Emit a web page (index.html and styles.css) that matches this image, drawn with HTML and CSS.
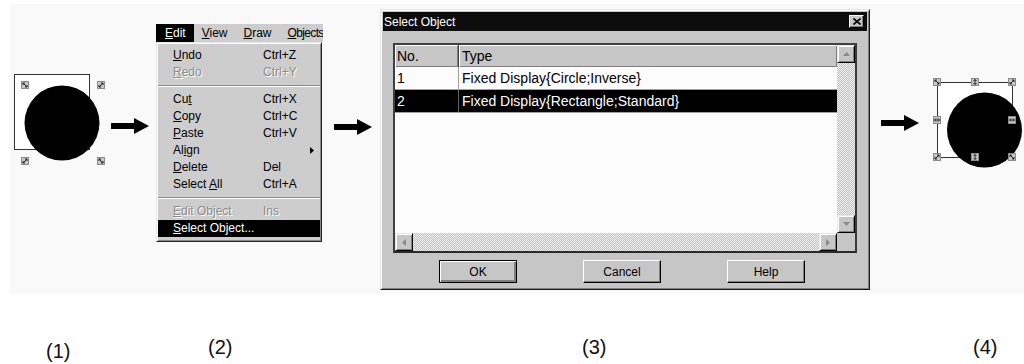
FILE: index.html
```html
<!DOCTYPE html>
<html lang="en">

<head>
    <meta charset="UTF-8">
    <meta name="viewport" content="width=device-width, initial-scale=1.0">
    <title>Select Object</title>
    <link rel="stylesheet" href="styles.css">
</head>

<body>
    <div class="stage">
        <!-- (1) circle drawn over a selected rectangle -->
        <svg class="fig fig-before" width="92" height="92" viewBox="0 0 92 92">
            <defs>
                <g id="h-nw">
                    <rect x="0.5" y="0.5" width="7" height="7" fill="#c6c6c6" stroke="#8c8c8c"/>
                    <path d="M2 2 L6 6 M2 2 h2 M2 2 v2 M6 6 h-2 M6 6 v-2" stroke="#222" stroke-width="1"/>
                </g>
                <g id="h-ne">
                    <rect x="0.5" y="0.5" width="7" height="7" fill="#c6c6c6" stroke="#8c8c8c"/>
                    <path d="M6 2 L2 6 M6 2 h-2 M6 2 v2 M2 6 h2 M2 6 v-2" stroke="#222" stroke-width="1"/>
                </g>
                <g id="h-v">
                    <rect x="0.5" y="0.5" width="7" height="7" fill="#c6c6c6" stroke="#8c8c8c"/>
                    <path d="M4 1.5 V6.5 M2.5 3 L4 1.5 L5.5 3 M2.5 5 L4 6.5 L5.5 5" stroke="#222" stroke-width="1" fill="none"/>
                </g>
                <g id="h-h">
                    <rect x="0.5" y="0.5" width="7" height="7" fill="#c6c6c6" stroke="#8c8c8c"/>
                    <path d="M1.5 4 H6.5 M3 2.5 L1.5 4 L3 5.5 M5 2.5 L6.5 4 L5 5.5" stroke="#222" stroke-width="1" fill="none"/>
                </g>
            </defs>
            <rect x="0.5" y="0.5" width="75" height="75" fill="#fff" stroke="#333"/>
            <circle cx="48" cy="49" r="37.5" fill="#000"/>
            <use href="#h-nw" x="7" y="7"/>
            <use href="#h-ne" x="83" y="7"/>
            <use href="#h-ne" x="7" y="83"/>
            <use href="#h-nw" x="83" y="83"/>
        </svg>

        <svg class="arrow arrow-1" width="38" height="16" viewBox="0 0 38 16">
            <path d="M0 5 H23 V0 L38 8 L23 16 V11 H0 Z" fill="#000"/>
        </svg>

        <!-- (2) Edit menu -->
        <div class="menu">
            <div class="menubar">
                <span class="menubar-item is-open"><u>E</u>dit</span>
                <span class="menubar-item"><u>V</u>iew</span>
                <span class="menubar-item"><u>D</u>raw</span>
                <span class="menubar-item"><u>O</u>bjects</span>
            </div>
            <ul class="dropdown">
                <li class="item"><span><u>U</u>ndo</span><span>Ctrl+Z</span></li>
                <li class="item is-disabled"><span><u>R</u>edo</span><span>Ctrl+Y</span></li>
                <li class="sep"></li>
                <li class="item"><span>Cu<u>t</u></span><span>Ctrl+X</span></li>
                <li class="item"><span><u>C</u>opy</span><span>Ctrl+C</span></li>
                <li class="item"><span><u>P</u>aste</span><span>Ctrl+V</span></li>
                <li class="item"><span>Al<u>i</u>gn</span><span></span>
                    <svg class="submenu" width="4" height="7" viewBox="0 0 4 7"><path d="M0 0 L4 3.5 L0 7 Z" fill="#000"/></svg>
                </li>
                <li class="item"><span><u>D</u>elete</span><span>Del</span></li>
                <li class="item"><span>Select <u>A</u>ll</span><span>Ctrl+A</span></li>
                <li class="sep"></li>
                <li class="item is-disabled"><span><u>E</u>dit Object</span><span>Ins</span></li>
                <li class="item is-active"><span><u>S</u>elect Object...</span><span></span></li>
            </ul>
        </div>

        <svg class="arrow arrow-2" width="38" height="16" viewBox="0 0 38 16">
            <path d="M0 5 H23 V0 L38 8 L23 16 V11 H0 Z" fill="#000"/>
        </svg>

        <!-- (3) Select Object dialog -->
        <div class="dialog">
            <div class="titlebar">
                <span>Select Object</span>
                <span class="close">
                    <svg width="8" height="7" viewBox="0 0 8 7"><path d="M0.5 0.5 L7.5 6.5 M7.5 0.5 L0.5 6.5" stroke="#000" stroke-width="1.6"/></svg>
                </span>
            </div>
            <div class="dialog-body">
                <div class="listbox">
                    <div class="table">
                        <div class="row row-head">
                            <span class="cell">No.</span>
                            <span class="cell">Type</span>
                        </div>
                        <div class="row">
                            <span class="cell">1</span>
                            <span class="cell">Fixed Display{Circle;Inverse}</span>
                        </div>
                        <div class="row is-selected">
                            <span class="cell">2</span>
                            <span class="cell">Fixed Display{Rectangle;Standard}</span>
                        </div>
                    </div>
                    <div class="vscroll">
                        <span class="sbtn"><svg width="7" height="4" viewBox="0 0 7 4"><path d="M3.5 0 L7 4 H0 Z" fill="#8a8a8a"/></svg></span>
                        <span class="track"></span>
                        <span class="sbtn"><svg width="7" height="4" viewBox="0 0 7 4"><path d="M0 0 H7 L3.5 4 Z" fill="#8a8a8a"/></svg></span>
                    </div>
                    <div class="hscroll">
                        <span class="sbtn"><svg width="4" height="7" viewBox="0 0 4 7"><path d="M4 0 V7 L0 3.5 Z" fill="#8a8a8a"/></svg></span>
                        <span class="track"></span>
                        <span class="sbtn"><svg width="4" height="7" viewBox="0 0 4 7"><path d="M0 0 L4 3.5 L0 7 Z" fill="#8a8a8a"/></svg></span>
                    </div>
                    <div class="corner"></div>
                </div>
                <div class="dialog-buttons">
                    <button class="btn is-default">OK</button>
                    <button class="btn">Cancel</button>
                    <button class="btn">Help</button>
                </div>
            </div>
        </div>

        <svg class="arrow arrow-3" width="38" height="16" viewBox="0 0 38 16">
            <path d="M0 5 H23 V0 L38 8 L23 16 V11 H0 Z" fill="#000"/>
        </svg>

        <!-- (4) circle selected -->
        <svg class="fig fig-after" width="91" height="93" viewBox="0 0 91 93">
            <rect x="4.5" y="4.5" width="75" height="75" fill="#fff" stroke="#333"/>
            <circle cx="51.5" cy="52" r="37.5" fill="#000"/>
            <use href="#h-nw" x="0" y="0"/>
            <use href="#h-v" x="38" y="0"/>
            <use href="#h-ne" x="75" y="0"/>
            <use href="#h-h" x="0" y="38"/>
            <use href="#h-h" x="75" y="38"/>
            <use href="#h-ne" x="0" y="75"/>
            <use href="#h-v" x="38" y="75"/>
            <use href="#h-nw" x="75" y="75"/>
        </svg>
    </div>

    <div class="captions">
        <span class="cap cap-1">(1)</span>
        <span class="cap cap-2">(2)</span>
        <span class="cap cap-3">(3)</span>
        <span class="cap cap-4">(4)</span>
    </div>
</body>

</html>
```

FILE: styles.css
```css
body {
    margin: 0;
    background: #fff;
    font-family: 'Liberation Sans', Arial, sans-serif;
    color: #000;
}

.stage {
    display: flex;
    align-items: flex-start;
    width: 1014px;
    height: 290px;
    margin: 4px 0 0 10px;
    background: #f9f9f9;
}

.fig,
.arrow {
    display: block;
    flex-shrink: 0;
}

.fig-before {
    margin: 70px 0 0 4px;
}

.arrow-1 {
    margin: 114px 0 0 5px;
}

.arrow-2 {
    margin: 115px 0 0 11px;
}

.arrow-3 {
    margin: 111px 0 0 11px;
}

.fig-after {
    margin: 74px 0 0 14px;
}

/* menu */

.menu {
    width: 167px;
    margin: 20px 0 0 7px;
    font-size: 12px;
    flex-shrink: 0;
}

.menubar {
    display: flex;
    height: 18px;
    line-height: 18px;
    background: #cdcdcd;
    white-space: nowrap;
    overflow: hidden;
}

.menubar-item {
    padding: 0 8px;
}

.menubar-item:last-child {
    padding-right: 0;
    letter-spacing: -0.65px;
}

.menubar-item.is-open {
    padding-left: 9px;
    background: #000;
    color: #fff;
}

.dropdown {
    list-style: none;
    margin: 0;
    width: 166px;
    box-sizing: border-box;
    padding: 4px 1px 4px 1px;
    background: #cdcdcd;
    border: 1px solid;
    border-color: #e8e8e8 #222 #222 #e8e8e8;
    box-shadow: inset 1px 1px #fff, inset -1px -1px #8a8a8a;
}

.item {
    display: grid;
    grid-template-columns: 90px 1fr auto;
    align-items: center;
    height: 17px;
    line-height: 17px;
    padding: 0 6px 0 15px;
}

.item.is-disabled {
    color: #8c8c8c;
    text-shadow: 1px 1px 0 #fff;
}

.item.is-active {
    background: #000;
    color: #fff;
}

.submenu {
    display: block;
}

.sep {
    height: 2px;
    margin: 4px 0;
    background: #8a8a8a;
    border-bottom: 1px solid #fff;
    box-sizing: border-box;
}

/* dialog */

.dialog {
    display: flex;
    flex-direction: column;
    flex-shrink: 0;
    width: 490px;
    height: 281px;
    box-sizing: border-box;
    margin: 5px 0 0 8px;
    padding: 2px;
    background: #c6c6c6;
    border: 1px solid;
    border-color: #e6e6e6 #1a1a1a #1a1a1a #e6e6e6;
    box-shadow: inset 1px 1px #fff, inset -1px -1px #808080;
    font-size: 12px;
}

.titlebar {
    display: flex;
    align-items: center;
    justify-content: space-between;
    height: 19px;
    padding: 0 3px 0 1px;
    background: #0c0c0c;
    color: #fff;
}

.close {
    display: flex;
    align-items: center;
    justify-content: center;
    width: 15px;
    height: 13px;
    box-sizing: border-box;
    background: #c6c6c6;
    border: 1px solid;
    border-color: #fff #000 #000 #fff;
    box-shadow: inset -1px -1px #808080;
}

.dialog-body {
    padding: 12px 10px 0;
}

.listbox {
    display: grid;
    grid-template-columns: 1fr 18px;
    grid-template-rows: 1fr 18px;
    width: 464px;
    height: 210px;
    box-sizing: border-box;
    border: 2px solid;
    border-color: #404040 #3a3a3a #2a2a2a #404040;
}

.table {
    background: #fcfcfc;
    font-size: 14px;
}

.row {
    display: grid;
    grid-template-columns: 64px 1fr;
    height: 23px;
    line-height: 22px;
    box-sizing: border-box;
    border-bottom: 1px solid #a0a0a0;
}

.row .cell {
    padding-left: 2px;
    white-space: nowrap;
}

.row .cell:first-child {
    border-right: 1px solid #a0a0a0;
}

.row .cell + .cell {
    padding-left: 3px;
}

.row-head {
    height: 22px;
    line-height: 22px;
    border-bottom: none;
}

.row-head .cell {
    background: #c6c6c6;
    box-shadow: inset 1px 1px #fff, inset -1px -1px #808080;
}

.row-head .cell:first-child {
    border-right: 1px solid #404040;
}

.row.is-selected {
    background: #000;
    color: #fff;
}

.row.is-selected .cell:first-child {
    border-right-color: #606060;
}

.vscroll,
.hscroll {
    display: flex;
}

.vscroll {
    flex-direction: column;
}

.sbtn {
    display: flex;
    align-items: center;
    justify-content: center;
    width: 18px;
    height: 18px;
    flex-shrink: 0;
    box-sizing: border-box;
    background: #c6c6c6;
    border: 1px solid;
    border-color: #e8e8e8 #000 #000 #e8e8e8;
    box-shadow: inset 1px 1px #fff, inset -1px -1px #808080;
}

.track {
    flex: 1;
    background: repeating-conic-gradient(#c4c4c4 0 25%, #eeeeee 0 50%) 0 0 / 2px 2px;
}

.corner {
    background: #c6c6c6;
}

.dialog-buttons {
    display: flex;
    gap: 66px;
    margin-top: 7px;
    padding-left: 46px;
}

.btn {
    width: 78px;
    height: 23px;
    padding: 0;
    font-family: 'Liberation Sans', Arial, sans-serif;
    font-size: 12px;
    color: #000;
    background: #c6c6c6;
    border: 1px solid;
    border-color: #fff #000 #000 #fff;
    box-shadow: inset -1px -1px #808080;
}

.btn.is-default {
    border: 1px solid #000;
    box-shadow: inset 1px 1px #fff, inset -2px -2px #808080;
}

/* captions */

.captions {
    display: flex;
    align-items: flex-start;
    margin-top: 42px;
    font-size: 20px;
    line-height: 23px;
    color: #111;
}

.cap {
    width: 25px;
}

.cap-1 {
    margin: 4px 0 0 46px;
}

.cap-2 {
    margin-left: 137px;
}

.cap-3 {
    margin-left: 349px;
}

.cap-4 {
    margin-left: 366px;
}
```
